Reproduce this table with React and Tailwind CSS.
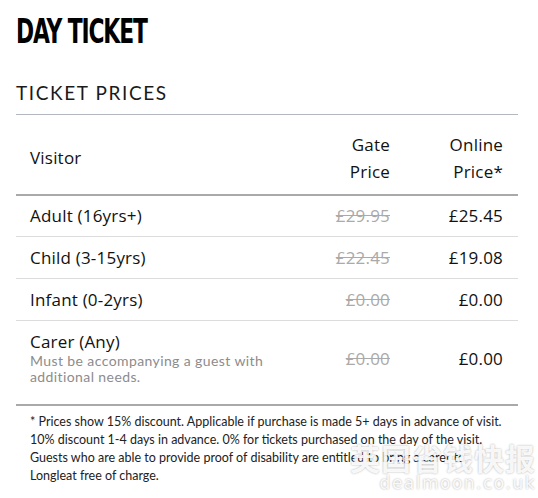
const rows = [
  { name: 'Adult (16yrs+)', gate: '£29.95', online: '£25.45' },
  { name: 'Child (3-15yrs)', gate: '£22.45', online: '£19.08' },
  { name: 'Infant (0-2yrs)', gate: '£0.00', online: '£0.00' },
]

const App = () => {
  return (
    <section className="relative w-[538px] h-[498px] overflow-hidden bg-white pl-4 pr-5 pt-[15px] font-['Open_Sans',sans-serif] text-[#111]">
      <h1 className="origin-left scale-x-[0.735] font-['DejaVu_Sans_Condensed',sans-serif] font-bold text-[33px] leading-none tracking-[-1.5px] text-black whitespace-nowrap">DAY TICKET</h1>
      <h2 className="mt-[35px] font-['Lato',sans-serif] text-[19px] leading-none tracking-[1.6px] text-[#1a1a1a]">TICKET PRICES</h2>
      <table className="mt-[12px] w-full border-collapse border-t border-[#b4b9bf] text-[17px] tracking-[0.2px]">
        <thead>
          <tr className="border-b-2 border-[#a9a9a9]">
            <th className="h-[80px] pt-[7px] pl-[14px] text-left font-normal align-middle">Visitor</th>
            <th className="w-[110px] pt-[7px] text-right font-normal leading-[27px] align-middle">Gate<br />Price</th>
            <th className="w-[128px] pt-[7px] pr-[15px] text-right font-normal leading-[27px] align-middle">Online<br />Price*</th>
          </tr>
        </thead>
        <tbody>
          {rows.map((r) => (
            <tr key={r.name} className="border-b border-[#dcdcdc]">
              <td className="h-[42px] pl-[14px]">{r.name}</td>
              <td className="text-right text-[#aaa] line-through">{r.gate}</td>
              <td className="pr-[15px] text-right">{r.online}</td>
            </tr>
          ))}
          <tr className="border-b-2 border-[#a9a9a9]">
            <td className="h-[84px] pb-[8px] pl-[14px] align-middle">
              <div className="leading-[22px]">Carer (Any)</div>
              <div className="whitespace-nowrap font-['Lato',sans-serif] text-[14px] leading-[16px] tracking-[0.4px] text-[#8c8c8c]">Must be accompanying a guest with<br />additional needs.</div>
            </td>
            <td className="pb-[8px] text-right text-[#aaa] line-through">£0.00</td>
            <td className="pb-[8px] pr-[15px] text-right">£0.00</td>
          </tr>
        </tbody>
      </table>
      <p className="mt-[7px] pl-[14px] font-['Lato',sans-serif] text-[12.5px] leading-[18px] text-[#222]">
        * Prices show 15% discount. Applicable if purchase is made 5+ days in advance of visit.<br />
        10% discount 1-4 days in advance. 0% for tickets purchased on the day of the visit.<br />
        Guests who are able to provide proof of disability are entitled to bring a carer to<br />
        Longleat free of charge.
      </p>
      <div className="absolute right-[2px] bottom-[6px] flex flex-col items-end text-white/90 [text-shadow:0_0_2px_rgba(0,0,0,0.35)]">
        <span className="font-['Noto_Sans_CJK_SC',sans-serif] text-[30px] font-bold leading-[34px] tracking-[1px]">英国省钱快报</span>
        <span className="font-['DejaVu_Sans',sans-serif] text-[17px] leading-[18px] tracking-[1.5px]">dealmoon.co.uk</span>
      </div>
    </section>
  )
}

export default App
